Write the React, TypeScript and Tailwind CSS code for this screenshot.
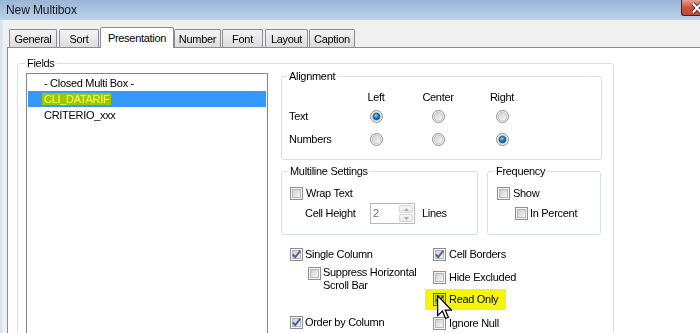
import React from "react";

const Check = ({ checked = false, hot = false }: { checked?: boolean; hot?: boolean }) => (
  <svg width="13" height="13" viewBox="0 0 13 13" className="block shrink-0">
    <defs>
      <linearGradient id="cbn" x1="0" y1="0" x2="1" y2="1">
        <stop offset="0" stopColor="#c9cdd3" />
        <stop offset="1" stopColor="#f7f7f7" />
      </linearGradient>
      <linearGradient id="cbh" x1="0" y1="0" x2="1" y2="1">
        <stop offset="0" stopColor="#a9d9f7" />
        <stop offset="1" stopColor="#e8f6fe" />
      </linearGradient>
    </defs>
    <rect x="0.5" y="0.5" width="12" height="12" fill="#f6f6f6" stroke={hot ? "#3c7fb1" : "#8e8f8f"} />
    <rect x="2.5" y="2.5" width="8" height="8" fill={hot ? "url(#cbh)" : "url(#cbn)"} stroke={hot ? "#7ec0ea" : "#b4b8be"} />
    {checked && (
      <path d="M2.8 6.4 L5.2 9.2 L10.4 2.6" fill="none" stroke="#4a5f97" strokeWidth="1.9" strokeLinejoin="miter" />
    )}
  </svg>
);

const Radio = ({ checked = false }: { checked?: boolean }) => (
  <svg width="13" height="13" viewBox="0 0 13 13" className="block">
    <defs>
      <linearGradient id="rg" x1="0" y1="0" x2="1" y2="1">
        <stop offset="0" stopColor="#cfcfcf" />
        <stop offset="1" stopColor="#f7f7f7" />
      </linearGradient>
      <radialGradient id="rb" cx="0.4" cy="0.35" r="0.7">
        <stop offset="0" stopColor="#8fd3ff" />
        <stop offset="0.5" stopColor="#1e7fc7" />
        <stop offset="1" stopColor="#0b4e86" />
      </radialGradient>
    </defs>
    <circle cx="6.5" cy="6.5" r="6" fill="#f5f5f5" stroke="#8e8f8f" />
    <circle cx="6.5" cy="6.5" r="4.3" fill="url(#rg)" stroke="#bdbdbd" strokeWidth="0.8" />
    {checked && <circle cx="6.5" cy="6.5" r="3.3" fill="url(#rb)" stroke="#174f7e" strokeWidth="0.8" />}
  </svg>
);

const Group = ({
  label,
  labelLeft,
  className,
  children,
}: {
  label: string;
  labelLeft: string;
  className: string;
  children?: React.ReactNode;
}) => (
  <div className={`relative shrink-0 border border-[#d5dfe5] rounded-[3px] ${className}`}>
    <div className={`absolute -top-[7px] ${labelLeft} bg-white px-[2px] leading-[13px]`}>{label}</div>
    {children}
  </div>
);

const tabs = [
  { name: "General", w: "w-[48px]", ml: "ml-0" },
  { name: "Sort", w: "w-[40px]", ml: "ml-[2px]" },
  { name: "Presentation", w: "w-[74px]", ml: "ml-[1px]", sel: true },
  { name: "Number", w: "w-[47px]", ml: "ml-0" },
  { name: "Font", w: "w-[41px]", ml: "ml-[1px]" },
  { name: "Layout", w: "w-[43px]", ml: "ml-[2px]" },
  { name: "Caption", w: "w-[46px]", ml: "ml-[1px]" },
];

export default function App() {
  return (
    <div className="relative w-[700px] h-[333px] overflow-hidden bg-[#f0f0f0] font-['Liberation_Sans',Arial,sans-serif] text-[11px] leading-[13px] tracking-[-0.3px] text-black">
      {/* Title bar */}
      <div className="flex h-[20px] bg-gradient-to-b from-[#9ab6d5] to-[#bcd3eb]">
        <div className="pl-[6px] pt-[3px] text-[12px] leading-[14px] tracking-[-0.1px] text-[#161616]">New Multibox</div>
        <div className="ml-auto w-[19px] h-[16px] overflow-hidden rounded-bl-[3px] border-l border-b border-[#4b2020] bg-gradient-to-b from-[#e5a092] via-[#c9543e] to-[#c24a36]">
          <svg width="19" height="16" viewBox="0 0 19 16" className="block">
            <path d="M11 3.5 L19 12.5 M19 3.5 L11 12.5" stroke="#3a2a2a" strokeWidth="4" />
            <path d="M11 3.5 L19 12.5 M19 3.5 L11 12.5" stroke="#ffffff" strokeWidth="2.2" />
          </svg>
        </div>
      </div>

      <div className="flex h-[313px]">
        <div className="w-[3px] bg-[#d6e3f1] border-r border-[#e4e9ef]" />
        <div className="flex-1 flex flex-col pl-[4px] min-h-0">
          {/* Tabs */}
          <div className="flex shrink-0 items-end h-[27px] pl-[2px]">
            {tabs.map((t) =>
              t.sel ? (
                <div
                  key={t.name}
                  className={`${t.w} ${t.ml} relative z-10 -mb-[1px] h-[21px] bg-white border border-b-0 border-[#898c95] rounded-t-[2px] flex justify-center pt-[4px]`}
                >
                  {t.name}
                </div>
              ) : (
                <div
                  key={t.name}
                  className={`${t.w} ${t.ml} h-[18px] border border-b-0 border-[#898c95] rounded-t-[2px] bg-gradient-to-b from-[#f4f4f4] to-[#dcdcdc] flex justify-center pt-[3px]`}
                >
                  {t.name}
                </div>
              )
            )}
          </div>

          {/* Tab page */}
          <div className="flex-1 min-h-0 overflow-hidden bg-white border-l border-t border-[#898c95] pl-[9px] pt-[15px]">
            <Group label="Fields" labelLeft="left-[7px]" className="w-[597px] h-[320px]">
              <div className="flex items-start pl-[8px] pt-[9px] gap-[13px]">
                {/* List box */}
                <div className="w-[242px] h-[300px] shrink-0 border border-[#828790] pt-[1px] px-[1px]">
                  <div className="h-[16px] flex items-center pl-[16px]">- Closed Multi Box -</div>
                  <div className="h-[16px] flex items-center pl-[14px] bg-[#3399ff]">
                    <span className="bg-[#9dc800] text-[#f2ff70] px-[2px] leading-[12px]">CLI_DATARIF</span>
                  </div>
                  <div className="h-[16px] flex items-center pl-[16px]">CRITERIO_xxx</div>
                </div>

                {/* Right column */}
                <div className="w-[321px] mt-[3px] flex flex-col">
                  <Group label="Alignment" labelLeft="left-[5px]" className="h-[84px] pl-[7px] pt-[12px]">
                    <div className="grid grid-cols-[56px_62px_62px_66px] grid-rows-[16px_22px_24px] items-center">
                      <div />
                      <div className="text-center">Left</div>
                      <div className="text-center">Center</div>
                      <div className="text-center">Right</div>
                      <div>Text</div>
                      <div className="justify-self-center"><Radio checked /></div>
                      <div className="justify-self-center"><Radio /></div>
                      <div className="justify-self-center"><Radio /></div>
                      <div>Numbers</div>
                      <div className="justify-self-center"><Radio /></div>
                      <div className="justify-self-center"><Radio /></div>
                      <div className="justify-self-center"><Radio checked /></div>
                    </div>
                  </Group>

                  <div className="flex gap-[9px] mt-[11px]">
                    <Group label="Multiline Settings" labelLeft="left-[6px]" className="w-[197px] h-[64px] pl-[8px] pt-[15px]">
                      <div className="flex items-center gap-[3px]">
                        <Check />
                        <span>Wrap Text</span>
                      </div>
                      <div className="flex items-center mt-[3px] pl-[15px]">
                        <span className="w-[65px]">Cell Height</span>
                        <div className="w-[45px] h-[21px] border border-[#b9b9b9] flex">
                          <div className="flex-1 pl-[2px] pt-[3px] text-[#6d6d6d]">2</div>
                          <div className="w-[16px] flex flex-col gap-[1px] p-[1px]">
                            <div className="flex-1 border border-[#d6d6d6] rounded-[2px] bg-gradient-to-b from-[#f7f7f7] to-[#e9e9e9] flex items-center justify-center">
                              <svg width="5" height="3" viewBox="0 0 5 3" className="block"><path d="M0 3 L2.5 0 L5 3 Z" fill="#a9a9a9" /></svg>
                            </div>
                            <div className="flex-1 border border-[#d6d6d6] rounded-[2px] bg-gradient-to-b from-[#f7f7f7] to-[#e9e9e9] flex items-center justify-center">
                              <svg width="5" height="3" viewBox="0 0 5 3" className="block"><path d="M0 0 L2.5 3 L5 0 Z" fill="#a9a9a9" /></svg>
                            </div>
                          </div>
                        </div>
                        <span className="ml-[7px]">Lines</span>
                      </div>
                    </Group>

                    <Group label="Frequency" labelLeft="left-[6px]" className="w-[114px] h-[64px] pl-[9px] pt-[15px]">
                      <div className="flex items-center gap-[3px]">
                        <Check />
                        <span>Show</span>
                      </div>
                      <div className="flex items-center gap-[2px] mt-[7px] pl-[18px]">
                        <Check />
                        <span>In Percent</span>
                      </div>
                    </Group>
                  </div>

                  {/* Bottom options */}
                  <div className="flex mt-[13px] pl-[9px]">
                    <div className="w-[143px] flex flex-col">
                      <div className="flex items-center gap-[2px]">
                        <Check checked />
                        <span>Single Column</span>
                      </div>
                      <div className="flex items-start gap-[2px] mt-[6px] pl-[18px]">
                        <Check />
                        <span className="-mt-[1px] leading-[13px]">
                          Suppress Horizontal
                          <br />
                          Scroll Bar
                        </span>
                      </div>
                      <div className="flex items-center gap-[2px] mt-[24px]">
                        <Check checked />
                        <span>Order by Column</span>
                      </div>
                    </div>
                    <div className="flex flex-col">
                      <div className="flex items-center gap-[3px]">
                        <Check checked />
                        <span>Cell Borders</span>
                      </div>
                      <div className="flex items-center gap-[3px] mt-[10px]">
                        <Check />
                        <span>Hide Excluded</span>
                      </div>
                      <div className="relative flex items-center gap-[3px] mt-[9px]">
                        <Check checked hot />
                        <span>Read Only</span>
                        <div className="absolute -left-[8px] -top-[4px] w-[81px] h-[21px] bg-[#f5f50c] mix-blend-multiply" />
                      </div>
                      <div className="flex items-center gap-[3px] mt-[11px]">
                        <Check />
                        <span>Ignore Null</span>
                      </div>
                    </div>
                  </div>
                </div>
              </div>
            </Group>
          </div>
        </div>
      </div>

      {/* Mouse cursor */}
      <svg
        width="15"
        height="25"
        viewBox="0 0 12 20"
        className="absolute left-[437px] top-[295px] z-20"
      >
        <path d="M0.5 0.5 L0.5 16.5 L4.3 12.9 L6.9 18.8 L9.1 17.8 L6.6 12 L11.5 12 Z" fill="#ffffff" stroke="#000000" strokeWidth="1" strokeLinejoin="miter" />
      </svg>
    </div>
  );
}
